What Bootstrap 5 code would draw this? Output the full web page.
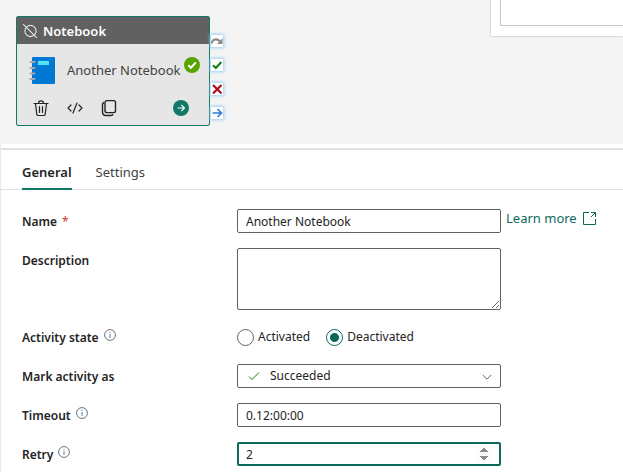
<!DOCTYPE html>
<html lang="en">
<head>
<meta charset="utf-8">
<meta name="viewport" content="width=device-width, initial-scale=1">
<title>Notebook activity</title>
<link href="https://cdn.jsdelivr.net/npm/bootstrap@5.3.0/dist/css/bootstrap.min.css" rel="stylesheet">
<style>
:root { --brand: #117865; --ink: #242424; --line: #616161; }
body { font-family: "Noto Sans", "Open Sans", sans-serif; font-size: 12px; line-height: 18px; color: var(--ink); background: #fff; }
svg { display: block; flex: none; }

/* canvas */
.canvas { height: 144px; background: #f4f4f4; }
.preview { top: 0; right: 0; left: 491px; height: 36px; background: #fff; padding: 0 0 10px 9px; box-shadow: 0 0 2px rgba(0,0,0,.3); }
.preview-frame { height: 26px; border: solid #c8c8c8; border-width: 0 0 1px 1px; }
.activity { left: 16px; top: 16px; width: 194px; height: 110px; border: 1px solid var(--brand); border-radius: 2px; background: #e6e6e6; }
.activity-head { height: 27px; padding: 0 6px; gap: 6px; background: #616161; color: #fff; font-size: 13px; font-weight: 600; }
.activity-main { height: 52px; padding: 0 9px 0 12px; gap: 10px; font-size: 13px; color: #424242; }
.activity-tools { padding: 3px 20px 0 15px; gap: 16px; }
.tool { padding: 0; border: 0; background: none; color: #242424; }
.state { right: 9px; top: 40px; }
.ports { left: 211px; top: 35px; gap: 12px; }
.port { width: 12px; height: 12px; background: #fff; box-shadow: 0 0 3px 1px #9ccbf5; }

/* properties */
.sheet { border-left: 1px solid #e8e8e8; }
.splitter { height: 6px; border-bottom: 2px solid #e0e0e0; }
.tabs { height: 40px; padding-left: 21px; gap: 24px; border-bottom: 1px solid #e0e0e0; }
.tab { height: 40px; padding: 5px 0 0; border: 0; border-bottom: 2px solid transparent; background: none; font-size: 13px; color: #424242; }
.tab.active { border-color: var(--brand); font-weight: 600; color: var(--ink); }
.fields { padding: 19px 12px 6px 21px; gap: 15px; }
.field { gap: 5px; }
.caption { width: 210px; min-height: 24px; padding-top: 4px; font-weight: 600; gap: 5px; }
.star { color: #d13438; font-weight: 400; }
.control { flex: 0 1 264px; min-width: 0; }
.box { display: block; width: 100%; height: 24px; padding: 0 8px; border: 1px solid var(--line); border-radius: 2px; background: #fff; color: var(--ink); font-size: 12px; line-height: 18px; outline: 0; }
.box-tall { height: 62px; }
.box-select { appearance: none; padding-left: 32px; }
.box-focus { border: 2px solid #0c695a; padding: 0 7px; }
.box-focus::-webkit-inner-spin-button { opacity: 1; }
.tick { left: 11px; top: 6px; pointer-events: none; }
.chevron { right: 9px; top: 8px; pointer-events: none; }
.choice { gap: 4px; }
.dot { appearance: none; width: 17px; height: 17px; margin: 0; border: 1px solid var(--line); border-radius: 50%; background: #fff; }
.dot:checked { border-color: #0c695a; background: radial-gradient(circle, #0c695a 4px, #fff 5px); }
.more { font-size: 13px; gap: 6px; color: #0c695a; height: 18px; text-decoration: none; }
</style>
<script src="https://cdn.jsdelivr.net/npm/bootstrap@5.3.0/dist/js/bootstrap.bundle.min.js"></script>
</head>
<body>
<svg width="0" height="0" class="position-absolute" aria-hidden="true">
  <symbol id="info" viewBox="0 0 12 12"><circle cx="6" cy="6" r="5.4" fill="none" stroke="#616161" stroke-width=".9"/><path d="M6 5v4M6 3v1" stroke="#4a7fa8" stroke-width="1"/></symbol>
</svg>

<section class="canvas position-relative overflow-hidden">
  <div class="preview position-absolute"><div class="preview-frame"></div></div>
  <div class="activity position-absolute">
    <div class="activity-head d-flex align-items-center">
      <svg width="14" height="14" viewBox="0 0 14 14" fill="none" stroke="#e6e6e6" stroke-width="1.1"><circle cx="7.5" cy="7" r="5.6"/><path d="M0 0l14 14"/></svg>
      <span>Notebook</span>
    </div>
    <div class="activity-main d-flex align-items-center">
      <svg width="28" height="28" viewBox="0 0 28 28"><rect x="3" y="1" width="23" height="27" rx="1" fill="#0078d4"/><rect x="9" y="5" width="11" height="4" rx=".5" fill="#50e6ff"/><path d="M1.500 6h4M1.500 12h4M1.500 17.500h4M1.500 23h4" stroke="#a6a6a6" stroke-width="2" stroke-linecap="round"/></svg>
      <span class="text-nowrap">Another Notebook</span>
    </div>
    <div class="activity-tools d-flex align-items-center">
      <button class="tool" type="button" aria-label="Delete"><svg width="18" height="18" viewBox="0 0 18 18" fill="none" stroke="currentColor" stroke-width="1.200" stroke-linecap="round"><path d="M2 4.500h14M6.500 4.300a2.500 2.500 0 0 1 5 0M3.500 4.700l1.300 10.600q.2 1.200 1.400 1.200h5.600q1.200 0 1.400-1.200l1.300-10.600M7.500 7.500v6M10.500 7.500v6"/></svg></button>
      <button class="tool" type="button" aria-label="View code"><svg width="18" height="18" viewBox="0 0 18 18" fill="none" stroke="currentColor" stroke-width="1.200" stroke-linecap="round" stroke-linejoin="round"><path d="M5 6L2 9l3 3M13 6l3 3-3 3M11 4L7 14"/></svg></button>
      <button class="tool" type="button" aria-label="Copy"><svg width="18" height="18" viewBox="0 0 18 18" fill="none" stroke="currentColor" stroke-width="1.400"><rect x="5" y="1.600" width="10.500" height="12" rx="1.800"/><path d="M4 3.500q-1.500.5-1.500 2V13q0 3.500 3.500 3.500h5q1.500 0 2-1.200"/></svg></button>
      <button class="tool ms-auto" type="button" aria-label="Open"><svg width="16" height="16" viewBox="0 0 16 16"><circle cx="8" cy="8" r="8" fill="#117865"/><path d="M4.500 8h7M8.300 4.800L11.500 8l-3.200 3.200" fill="none" stroke="#fff" stroke-width="1.100"/></svg></button>
    </div>
    <svg class="state position-absolute" width="16" height="16" viewBox="0 0 16 16"><circle cx="8" cy="8" r="8" fill="#57a300"/><path d="M4.300 8.200l2.600 2.600 5-5.400" fill="none" stroke="#fff" stroke-width="2"/></svg>
  </div>
  <div class="ports position-absolute d-flex flex-column">
    <svg class="port" viewBox="0 0 12 12"><path d="M.5 8.500C1.500 4 6 3 9 6.500" fill="none" stroke="#8a8886" stroke-width="2"/><path d="M11.500 3v6H6.200z" fill="#8a8886"/></svg>
    <svg class="port" viewBox="0 0 12 12"><path d="M2 6.300l2.800 2.700L10.300 3" fill="none" stroke="#107c10" stroke-width="2"/></svg>
    <svg class="port" viewBox="0 0 12 12"><path d="M2 2l8.500 8.500M10.500 2L2 10.500" fill="none" stroke="#b10e1c" stroke-width="2.200"/></svg>
    <svg class="port" viewBox="0 0 12 12"><path d="M1.500 6h9M6.500 2l4 4-4 4" fill="none" stroke="#2b7cd3" stroke-width="1.600"/></svg>
  </div>
</section>

<section class="sheet">
  <div class="splitter"></div>
  <div class="tabs d-flex" role="tablist">
    <button class="tab active" type="button" role="tab" aria-selected="true">General</button>
    <button class="tab" type="button" role="tab" aria-selected="false">Settings</button>
  </div>
  <form class="fields d-flex flex-column">
    <div class="field d-flex">
      <label class="caption flex-shrink-0 d-flex" for="name">Name <span class="star">*</span></label>
      <div class="control"><input class="box" id="name" type="text" value="Another Notebook"></div>
      <a class="more d-flex align-items-center text-nowrap" href="#">Learn more
        <svg width="13" height="13" viewBox="0 0 13 13" fill="none" stroke="currentColor"><path d="M6 .5H.5v12h12V7M8 .5h4.500V5M12.300 .7L8 5"/></svg></a>
    </div>
    <div class="field d-flex">
      <label class="caption flex-shrink-0" for="desc">Description</label>
      <div class="control"><textarea class="box box-tall" id="desc"></textarea></div>
    </div>
    <div class="field d-flex" role="radiogroup" aria-labelledby="stateLabel">
      <span class="caption flex-shrink-0 d-flex" id="stateLabel">Activity state <svg width="12" height="12"><use href="#info"/></svg></span>
      <div class="control d-flex align-items-center gap-3">
        <span class="choice d-flex align-items-center"><input class="dot" type="radio" name="state" id="on"><label for="on">Activated</label></span>
        <span class="choice d-flex align-items-center"><input class="dot" type="radio" name="state" id="off" checked><label for="off">Deactivated</label></span>
      </div>
    </div>
    <div class="field d-flex">
      <label class="caption flex-shrink-0" for="mark-as">Mark activity as</label>
      <div class="control position-relative">
        <select class="box box-select" id="mark-as"><option>Succeeded</option><option>Failed</option><option>Skipped</option></select>
        <svg class="tick position-absolute" width="12" height="12" viewBox="0 0 12 12" fill="none" stroke="#107c10"><path d="M1 6.500l3 3 7-7"/></svg>
        <svg class="chevron position-absolute" width="10" height="10" viewBox="0 0 10 10" fill="none" stroke="#616161"><path d="M.8 3L5 7.200 9.200 3"/></svg>
      </div>
    </div>
    <div class="field d-flex">
      <label class="caption flex-shrink-0 d-flex" for="timeout">Timeout <svg width="12" height="12"><use href="#info"/></svg></label>
      <div class="control"><input class="box" id="timeout" type="text" value="0.12:00:00"></div>
    </div>
    <div class="field d-flex">
      <label class="caption flex-shrink-0 d-flex" for="retry">Retry <svg width="12" height="12"><use href="#info"/></svg></label>
      <div class="control"><input class="box box-focus" id="retry" type="number" value="2"></div>
    </div>
  </form>
</section>
</body>
</html>
